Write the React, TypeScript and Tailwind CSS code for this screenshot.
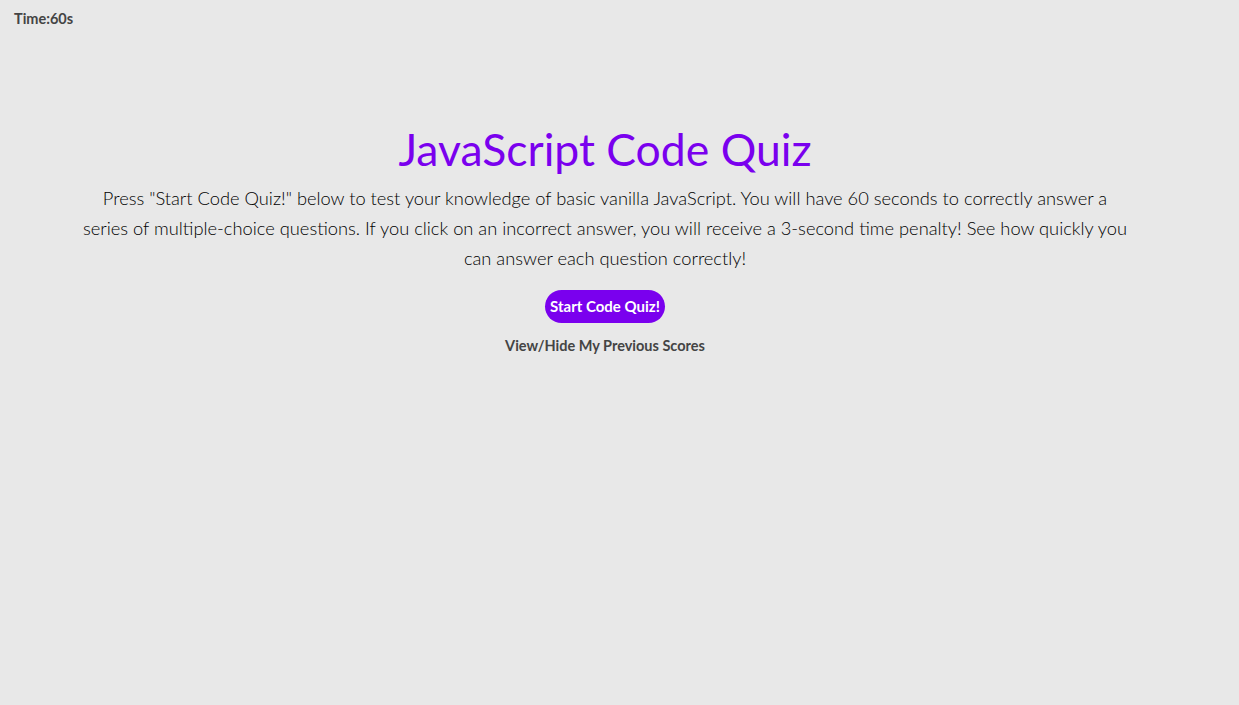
export default function App() {
  return (
    <div
      className="min-h-[705px] bg-[#e8e8e8] text-[#000]"
      style={{ fontFamily: '"Lato", "Open Sans", sans-serif' }}
    >
      <header className="px-[14px] pt-[8px] text-[14.5px] font-bold text-[#444]">
        Time:60s
      </header>
      <main className="flex flex-col items-center pr-[29px] pt-[89px]">
        <h1 className="text-[44.5px] leading-[60px] text-[#7a00ee]">
          JavaScript Code Quiz
        </h1>
        <p className="mt-[4px] max-w-[1046px] text-center text-[18.3px] font-light leading-[30px]">
          Press "Start Code Quiz!" below to test your knowledge of basic vanilla JavaScript. You
          will have 60 seconds to correctly answer a series of multiple-choice questions. If you
          click on an incorrect answer, you will receive a 3-second time penalty! See how quickly
          you can answer each question correctly!
        </p>
        <button className="mt-[17px] h-[33px] rounded-full bg-[#7a00ee] px-[5px] text-[15px] font-bold text-white">
          Start Code Quiz!
        </button>
        <button className="mt-[12px] text-[14.5px] font-bold text-[#444]">
          View/Hide My Previous Scores
        </button>
      </main>
    </div>
  );
}
